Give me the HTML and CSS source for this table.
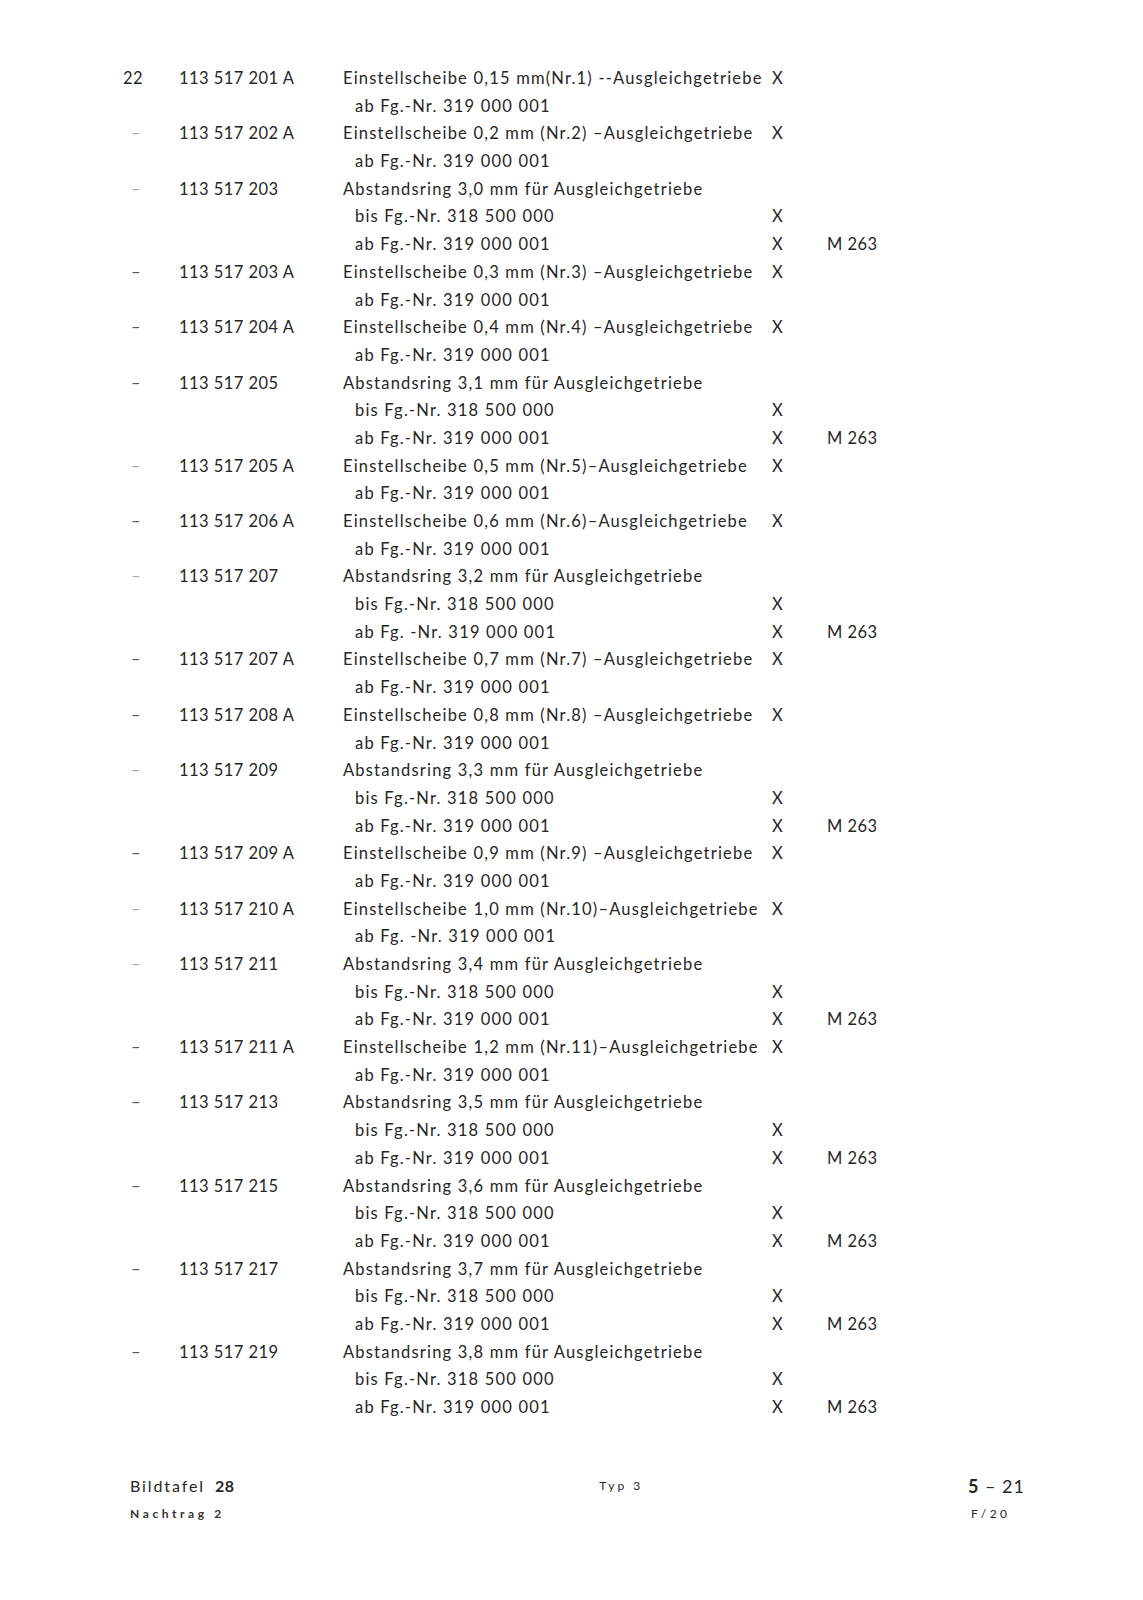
FILE: index.html
```html
<!DOCTYPE html>
<html lang="de">
<head>
<meta charset="utf-8">
<title>Bildtafel 28 – Typ 3</title>
<link rel="stylesheet" href="styles.css">
</head>
<body>
<div class="page">
  <div class="list">
    <div class="row"><span class="pos">22</span><span class="part">113 517 201 A</span><span class="desc">Einstellscheibe 0,15 mm(Nr.1) --Ausgleichgetriebe</span><span class="x">X</span><span class="ref"></span></div>
    <div class="row"><span class="pos"></span><span class="part"></span><span class="desc sub">ab Fg.-Nr. 319 000 001</span><span class="x"></span><span class="ref"></span></div>

    <div class="row"><span class="pos dash light">–</span><span class="part">113 517 202 A</span><span class="desc">Einstellscheibe 0,2 mm (Nr.2) –Ausgleichgetriebe</span><span class="x">X</span><span class="ref"></span></div>
    <div class="row"><span class="pos"></span><span class="part"></span><span class="desc sub">ab Fg.-Nr. 319 000 001</span><span class="x"></span><span class="ref"></span></div>

    <div class="row"><span class="pos dash light">–</span><span class="part">113 517 203</span><span class="desc">Abstandsring 3,0 mm für Ausgleichgetriebe</span><span class="x"></span><span class="ref"></span></div>
    <div class="row"><span class="pos"></span><span class="part"></span><span class="desc sub">bis Fg.-Nr. 318 500 000</span><span class="x">X</span><span class="ref"></span></div>
    <div class="row"><span class="pos"></span><span class="part"></span><span class="desc sub">ab Fg.-Nr. 319 000 001</span><span class="x">X</span><span class="ref">M 263</span></div>

    <div class="row"><span class="pos dash">–</span><span class="part">113 517 203 A</span><span class="desc">Einstellscheibe 0,3 mm (Nr.3) –Ausgleichgetriebe</span><span class="x">X</span><span class="ref"></span></div>
    <div class="row"><span class="pos"></span><span class="part"></span><span class="desc sub">ab Fg.-Nr. 319 000 001</span><span class="x"></span><span class="ref"></span></div>

    <div class="row"><span class="pos dash">–</span><span class="part">113 517 204 A</span><span class="desc">Einstellscheibe 0,4 mm (Nr.4) –Ausgleichgetriebe</span><span class="x">X</span><span class="ref"></span></div>
    <div class="row"><span class="pos"></span><span class="part"></span><span class="desc sub">ab Fg.-Nr. 319 000 001</span><span class="x"></span><span class="ref"></span></div>

    <div class="row"><span class="pos dash">–</span><span class="part">113 517 205</span><span class="desc">Abstandsring 3,1 mm für Ausgleichgetriebe</span><span class="x"></span><span class="ref"></span></div>
    <div class="row"><span class="pos"></span><span class="part"></span><span class="desc sub">bis Fg.-Nr. 318 500 000</span><span class="x">X</span><span class="ref"></span></div>
    <div class="row"><span class="pos"></span><span class="part"></span><span class="desc sub">ab Fg.-Nr. 319 000 001</span><span class="x">X</span><span class="ref">M 263</span></div>

    <div class="row"><span class="pos dash light">–</span><span class="part">113 517 205 A</span><span class="desc">Einstellscheibe 0,5 mm (Nr.5)–Ausgleichgetriebe</span><span class="x">X</span><span class="ref"></span></div>
    <div class="row"><span class="pos"></span><span class="part"></span><span class="desc sub">ab Fg.-Nr. 319 000 001</span><span class="x"></span><span class="ref"></span></div>

    <div class="row"><span class="pos dash">–</span><span class="part">113 517 206 A</span><span class="desc">Einstellscheibe 0,6 mm (Nr.6)–Ausgleichgetriebe</span><span class="x">X</span><span class="ref"></span></div>
    <div class="row"><span class="pos"></span><span class="part"></span><span class="desc sub">ab Fg.-Nr. 319 000 001</span><span class="x"></span><span class="ref"></span></div>

    <div class="row"><span class="pos dash light">–</span><span class="part">113 517 207</span><span class="desc">Abstandsring 3,2 mm für Ausgleichgetriebe</span><span class="x"></span><span class="ref"></span></div>
    <div class="row"><span class="pos"></span><span class="part"></span><span class="desc sub">bis Fg.-Nr. 318 500 000</span><span class="x">X</span><span class="ref"></span></div>
    <div class="row"><span class="pos"></span><span class="part"></span><span class="desc sub">ab Fg. -Nr. 319 000 001</span><span class="x">X</span><span class="ref">M 263</span></div>

    <div class="row"><span class="pos dash">–</span><span class="part">113 517 207 A</span><span class="desc">Einstellscheibe 0,7 mm (Nr.7) –Ausgleichgetriebe</span><span class="x">X</span><span class="ref"></span></div>
    <div class="row"><span class="pos"></span><span class="part"></span><span class="desc sub">ab Fg.-Nr. 319 000 001</span><span class="x"></span><span class="ref"></span></div>

    <div class="row"><span class="pos dash">–</span><span class="part">113 517 208 A</span><span class="desc">Einstellscheibe 0,8 mm (Nr.8) –Ausgleichgetriebe</span><span class="x">X</span><span class="ref"></span></div>
    <div class="row"><span class="pos"></span><span class="part"></span><span class="desc sub">ab Fg.-Nr. 319 000 001</span><span class="x"></span><span class="ref"></span></div>

    <div class="row"><span class="pos dash light">–</span><span class="part">113 517 209</span><span class="desc">Abstandsring 3,3 mm für Ausgleichgetriebe</span><span class="x"></span><span class="ref"></span></div>
    <div class="row"><span class="pos"></span><span class="part"></span><span class="desc sub">bis Fg.-Nr. 318 500 000</span><span class="x">X</span><span class="ref"></span></div>
    <div class="row"><span class="pos"></span><span class="part"></span><span class="desc sub">ab Fg.-Nr. 319 000 001</span><span class="x">X</span><span class="ref">M 263</span></div>

    <div class="row"><span class="pos dash">–</span><span class="part">113 517 209 A</span><span class="desc">Einstellscheibe 0,9 mm (Nr.9) –Ausgleichgetriebe</span><span class="x">X</span><span class="ref"></span></div>
    <div class="row"><span class="pos"></span><span class="part"></span><span class="desc sub">ab Fg.-Nr. 319 000 001</span><span class="x"></span><span class="ref"></span></div>

    <div class="row"><span class="pos dash light">–</span><span class="part">113 517 210 A</span><span class="desc">Einstellscheibe 1,0 mm (Nr.10)–Ausgleichgetriebe</span><span class="x">X</span><span class="ref"></span></div>
    <div class="row"><span class="pos"></span><span class="part"></span><span class="desc sub">ab Fg. -Nr. 319 000 001</span><span class="x"></span><span class="ref"></span></div>

    <div class="row"><span class="pos dash light">–</span><span class="part">113 517 211</span><span class="desc">Abstandsring 3,4 mm für Ausgleichgetriebe</span><span class="x"></span><span class="ref"></span></div>
    <div class="row"><span class="pos"></span><span class="part"></span><span class="desc sub">bis Fg.-Nr. 318 500 000</span><span class="x">X</span><span class="ref"></span></div>
    <div class="row"><span class="pos"></span><span class="part"></span><span class="desc sub">ab Fg.-Nr. 319 000 001</span><span class="x">X</span><span class="ref">M 263</span></div>

    <div class="row"><span class="pos dash">–</span><span class="part">113 517 211 A</span><span class="desc">Einstellscheibe 1,2 mm (Nr.11)–Ausgleichgetriebe</span><span class="x">X</span><span class="ref"></span></div>
    <div class="row"><span class="pos"></span><span class="part"></span><span class="desc sub">ab Fg.-Nr. 319 000 001</span><span class="x"></span><span class="ref"></span></div>

    <div class="row"><span class="pos dash">–</span><span class="part">113 517 213</span><span class="desc">Abstandsring 3,5 mm für Ausgleichgetriebe</span><span class="x"></span><span class="ref"></span></div>
    <div class="row"><span class="pos"></span><span class="part"></span><span class="desc sub">bis Fg.-Nr. 318 500 000</span><span class="x">X</span><span class="ref"></span></div>
    <div class="row"><span class="pos"></span><span class="part"></span><span class="desc sub">ab Fg.-Nr. 319 000 001</span><span class="x">X</span><span class="ref">M 263</span></div>

    <div class="row"><span class="pos dash">–</span><span class="part">113 517 215</span><span class="desc">Abstandsring 3,6 mm für Ausgleichgetriebe</span><span class="x"></span><span class="ref"></span></div>
    <div class="row"><span class="pos"></span><span class="part"></span><span class="desc sub">bis Fg.-Nr. 318 500 000</span><span class="x">X</span><span class="ref"></span></div>
    <div class="row"><span class="pos"></span><span class="part"></span><span class="desc sub">ab Fg.-Nr. 319 000 001</span><span class="x">X</span><span class="ref">M 263</span></div>

    <div class="row"><span class="pos dash">–</span><span class="part">113 517 217</span><span class="desc">Abstandsring 3,7 mm für Ausgleichgetriebe</span><span class="x"></span><span class="ref"></span></div>
    <div class="row"><span class="pos"></span><span class="part"></span><span class="desc sub">bis Fg.-Nr. 318 500 000</span><span class="x">X</span><span class="ref"></span></div>
    <div class="row"><span class="pos"></span><span class="part"></span><span class="desc sub">ab Fg.-Nr. 319 000 001</span><span class="x">X</span><span class="ref">M 263</span></div>

    <div class="row"><span class="pos dash">–</span><span class="part">113 517 219</span><span class="desc">Abstandsring 3,8 mm für Ausgleichgetriebe</span><span class="x"></span><span class="ref"></span></div>
    <div class="row"><span class="pos"></span><span class="part"></span><span class="desc sub">bis Fg.-Nr. 318 500 000</span><span class="x">X</span><span class="ref"></span></div>
    <div class="row"><span class="pos"></span><span class="part"></span><span class="desc sub">ab Fg.-Nr. 319 000 001</span><span class="x">X</span><span class="ref">M 263</span></div>
  </div>

  <div class="footer">
    <div class="foot-left">
      <div class="plate">Bildtafel <b>28</b></div>
      <div class="supplement">Nachtrag 2</div>
    </div>
    <div class="foot-mid">Typ 3</div>
    <div class="foot-right">
      <div class="pageno"><b>5</b> – 21</div>
      <div class="code">F/20</div>
    </div>
  </div>
</div>
</body>
</html>
```

FILE: styles.css
```css
html, body {
  margin: 0;
  padding: 0;
  background: #ffffff;
}

.page {
  width: 1143px;
  height: 1600px;
  box-sizing: border-box;
  padding: 65px 0 0 123px;
  font-family: "Lato", "Liberation Sans", sans-serif;
  font-weight: 400;
  color: #262626;
}

.list {
  display: flex;
  flex-direction: column;
}

.row {
  display: grid;
  grid-template-columns: 56px 164px 428px 56px 80px;
  height: 27.7px;
  line-height: 27.7px;
  font-size: 16.5px;
  letter-spacing: 0.45px;
  white-space: nowrap;
}

.desc {
  letter-spacing: 1.2px;
}

.pos.dash {
  padding-left: 8px;
  color: #555;
}

.pos.light {
  color: #aaa;
}

.desc.sub {
  padding-left: 12px;
}

.x {
  padding-left: 1px;
}

.footer {
  display: flex;
  justify-content: space-between;
  align-items: flex-start;
  margin-top: 50px;
  padding-left: 7px;
  width: 900px;
}

.plate {
  font-size: 16px;
  letter-spacing: 1.9px;
  line-height: 28px;
}

.plate b {
  font-weight: 700;
  letter-spacing: 0.5px;
  margin-left: 4px;
}

.supplement {
  font-size: 12px;
  letter-spacing: 3.6px;
  line-height: 28px;
  font-weight: 700;
  color: #333;
}

.foot-mid {
  font-size: 12px;
  letter-spacing: 3px;
  line-height: 28px;
  margin-left: 40px;
}

.foot-right {
  text-align: left;
  width: 62px;
  margin-right: 0;
}

.pageno {
  font-size: 18px;
  line-height: 28px;
  letter-spacing: 1px;
}

.code {
  font-size: 12px;
  letter-spacing: 3.5px;
  line-height: 28px;
  padding-left: 3px;
}
```
